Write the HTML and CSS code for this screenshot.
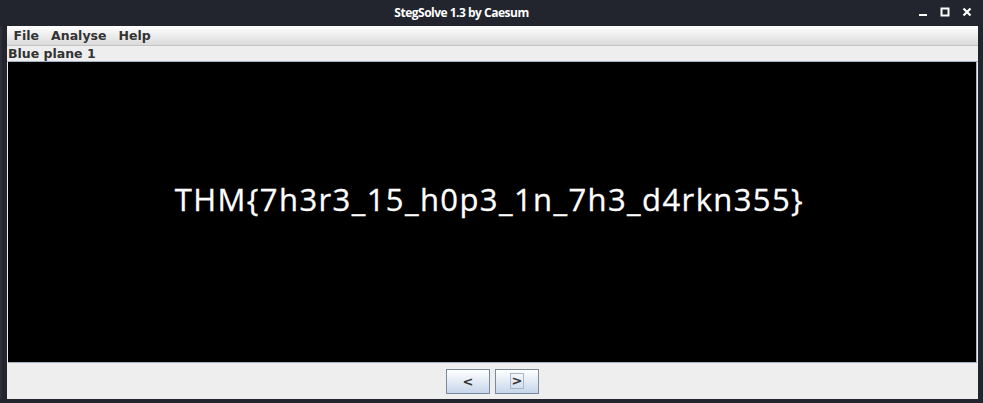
FILE: index.html
```html
<!DOCTYPE html>
<html>
<head>
<meta charset="utf-8">
<link rel="stylesheet" href="styles.css">
</head>
<body>
<div class="screen">
  <div class="titlebar">
    <div class="title">StegSolve 1.3 by Caesum</div>
    <div class="wm-buttons">
      <svg class="wm" width="10" height="10" viewBox="0 0 10 10"><rect x="1" y="7" width="8" height="2" fill="#fff"/></svg>
      <svg class="wm" width="10" height="10" viewBox="0 0 10 10"><rect x="1.5" y="1.5" width="7" height="7" fill="none" stroke="#fff" stroke-width="2"/></svg>
      <svg class="wm" width="10" height="10" viewBox="0 0 10 10"><path d="M1.5 1.5 L8.5 8.5 M8.5 1.5 L1.5 8.5" stroke="#fff" stroke-width="2.2"/></svg>
    </div>
  </div>
  <div class="frame">
    <div class="leftgap"></div>
    <div class="window">
      <div class="menubar">
        <span class="menu">File</span>
        <span class="menu">Analyse</span>
        <span class="menu">Help</span>
      </div>
      <div class="label">Blue plane 1</div>
      <div class="image">
        <div class="flag">THM{7h3r3_15_h0p3_1n_7h3_d4rkn355}</div>
      </div>
      <div class="controls">
        <button class="btn">&lt;</button>
        <button class="btn focus"><span class="focusring">&gt;</span></button>
      </div>
    </div>
  </div>
</div>
</body>
</html>
```
FILE: styles.css
```css
* { box-sizing: border-box; }
html, body { margin: 0; padding: 0; }
body { width: 983px; height: 403px; overflow: hidden; background: #22252e; }
.screen { display: flex; flex-direction: column; width: 983px; height: 403px; }
.titlebar {
  height: 26px; flex: none; position: relative;
  display: flex; align-items: center; justify-content: center;
  background: #22252e;
}
.title {
  font-family: "Open Sans", "Noto Sans", sans-serif; font-weight: 700;
  font-size: 12px; color: #ffffff; letter-spacing: -0.5px;
  margin-left: -60px; margin-top: -2px;
}
.wm-buttons {
  position: absolute; right: 11px; top: 7px;
  display: flex; gap: 12px;
}
.wm { display: block; }
.frame { display: flex; flex: none; height: 373px; }
.leftgap { width: 7px; flex: none; border-left: 2px solid #2c2f38; }
.window { width: 971px; flex: none; display: flex; flex-direction: column; background: #eeeeee; }
.menubar {
  height: 20px; flex: none; display: flex; align-items: center;
  padding-left: 0.5px;
  background: linear-gradient(#ffffff, #dadada);
  border-bottom: 1px solid #c4c4c4;
  font-family: "DejaVu Sans", sans-serif; font-weight: 700; font-size: 12.5px; color: #333333;
}
.menu { padding: 0 6px; }
.label {
  height: 16px; flex: none;
  font-family: "DejaVu Sans", sans-serif; font-weight: 700; font-size: 12.5px; color: #333333;
  line-height: 14px; padding-top: 1px; padding-left: 1px;
  border-bottom: 1px solid #a3b3c3;
}
.image {
  height: 301px; flex: none; margin-left: 1px; width: 969px;
  background: #000000; border-bottom: 1px solid #a3b3c3; border-right: 1px solid #a3b3c3;
  display: flex; align-items: center; justify-content: center;
}
.flag {
  font-family: "Open Sans", sans-serif; font-size: 31px; color: #ffffff;
  letter-spacing: 1.4px; -webkit-text-stroke: 0.3px #ffffff;
  margin-top: -27px; margin-left: -5px;
}
.controls {
  height: 35px; flex: none;
  display: flex; justify-content: center; align-items: center; gap: 5px;
  padding-top: 1px;
}
.btn {
  width: 44px; height: 25px; padding: 0; margin: 0;
  border: 1px solid #7a8a99;
  background: linear-gradient(#ffffff, #c6d6ea);
  font-family: "DejaVu Sans", sans-serif; font-weight: 700; font-size: 13px; color: #333333;
  display: flex; align-items: center; justify-content: center;
}
.focusring { border: 1px solid #a3b8cc; padding: 0 1px; line-height: 14px; }
```
